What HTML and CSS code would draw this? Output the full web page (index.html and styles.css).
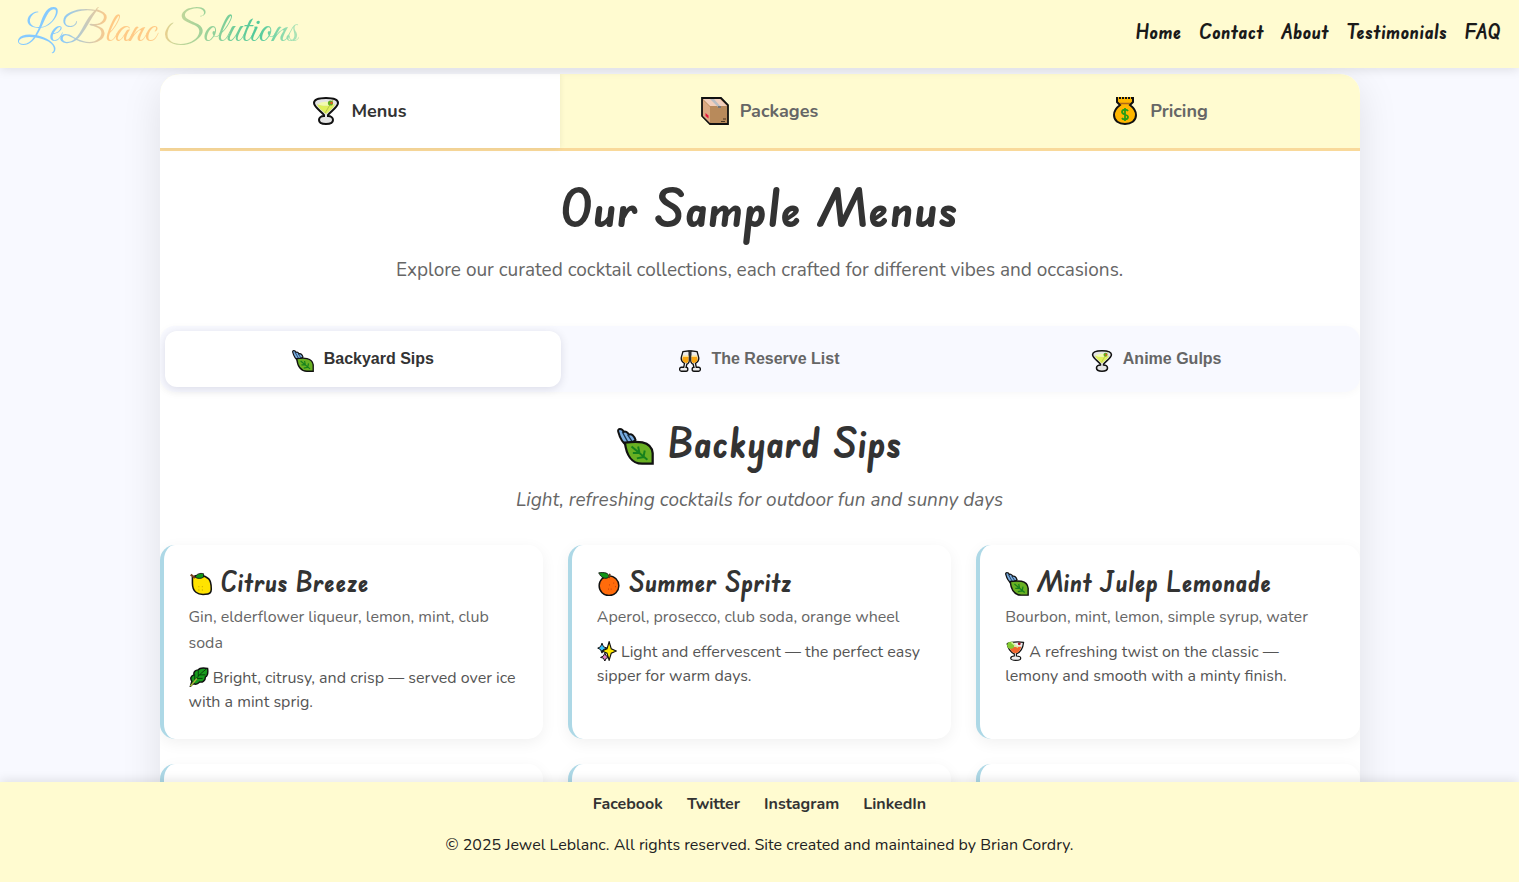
FILE: index.html
```html
<!DOCTYPE html>
<html lang="en">
<head>
<meta charset="utf-8">
<meta name="viewport" content="width=device-width, initial-scale=1">
<title>LeBlanc Solutions</title>
<link rel="stylesheet" href="styles.css">
</head>
<body>
<svg class="sprite" aria-hidden="true">
  <symbol id="martini" viewBox="0 0 28 28">
    <path d="M2 6C2 2.500 8 1 14 1s12 1.500 12 5c0 4-8 9-10 12v1c3 0 5 2 5 4 0 3-3 4-7 4s-7-1-7-4c0-2 2-4 5-4v-1C10 15 2 10 2 6z" fill="#e4e4e4" stroke="#111" stroke-width="2"/>
    <path d="M5 7c4 2 14 2 18 0-1 4-7 8-9 10C12 15 6 11 5 7z" fill="#dff05c"/>
    <path d="M6 7c4-3 12-3 16 0-4 2-12 2-16 0z" fill="#f2fbae"/>
    <path d="M13 16 21 3" stroke="#b8c34a"/><circle cx="18.500" cy="6" r="2.600" fill="#62ac20"/><circle cx="19.500" cy="6" r="1.200" fill="#ef5322"/>
  </symbol>
  <symbol id="box" viewBox="0 0 28 28">
    <path d="M1 1h19l7 7v19H9l-8-8z" fill="#b88a5b" stroke="#111" stroke-width="1.800"/>
    <path d="M2 2h17l7 7H9z" fill="#f2cfbc"/><path d="M2 3l7 7v16l-7-7z" fill="#dba982"/>
    <path d="M9 2h4l7 8h-3z" fill="#b9bec3"/><path d="M17 9h3v2h-3z" fill="#777"/>
    <path d="M4.500 16l3 2.500v3l-3-2.500z" fill="#e5173f"/><path d="M22 22h3M20 24.500h4" stroke="#493522"/>
  </symbol>
  <symbol id="money" viewBox="0 0 28 28">
    <path d="M6 1h16v4l-3 3c4 3 6 7 6 10 0 6-5 9-11 9S3 24 3 18c0-4 2-7 6-10L6 5z" fill="#ffb600" stroke="#111" stroke-width="2"/>
    <path d="M7 1h14" stroke="#ffb600" stroke-width="2" stroke-dasharray="1 2"/><path d="M9 6.500h10" stroke="#ac6719" stroke-width="1.500"/>
    <path d="M17 14c-1-2-6-2-6 1s6 2 6 5-5 3-6 1M14 11v13" fill="none" stroke="#269d16" stroke-width="1.800"/>
  </symbol>
  <symbol id="leaf" viewBox="0 0 28 28">
    <path d="M1 3C0 0 4 0 5 3c1-1 3 0 4 2 2-1 4 1 5 4l-6 5C4 11 2 7 1 3z" fill="#79ace0" stroke="#111" stroke-width="1.500"/>
    <path d="M4 3l5 9M8 5l4 6" stroke="#18344f"/>
    <path d="M6 11c8-1 20-2 21 8v8h-8C11 27 7 20 6 11z" fill="#69b023" stroke="#111" stroke-width="1.700"/>
    <path d="M11 14l12 10M16 14l1 5-5 0M21 17l-1 5-5 1" fill="none" stroke="#16801d" stroke-width="1.500"/>
  </symbol>
  <symbol id="cheers" viewBox="0 0 28 28">
    <path d="M5 2l8-1v13c0 2-2 4-3 4l-1 4c3 0 3 5 0 5H3c-3 0-3-5 0-5h3l1-5c-3-2-5-4-4-8zM23 2l-8-1v13c0 2 2 4 3 4l1 4c-3 0-3 5 0 5h6c3 0 3-5 0-5h-3l-1-5c3-2 5-4 4-8z" fill="#ececec" stroke="#111" stroke-width="1.700"/>
    <path d="M5 8l7 0v6c-1 3-3 3-5 2-3-2-3-4-2-8zM23 8l-7 0v6c1 3 3 3 5 2 3-2 3-4 2-8z" fill="#f8a511"/><path d="M5 7h7v2H5zM16 7h7v2h-7z" fill="#ffe18b"/>
  </symbol>
  <symbol id="lemon" viewBox="0 0 28 28">
    <path d="M4 6c5-3 14-3 19 2 3 3 3 7 3 12 0 4-2 6-7 6-9 1-15-3-15-13z" fill="#ffe300" stroke="#111" stroke-width="1.800"/>
    <path d="M7 6c2-4 6-5 10-4v4c-3 2-7 2-10 0z" fill="#129518" stroke="#111"/><path d="M2 3l5 4" stroke="#79401d" stroke-width="2.500"/>
    <path d="M11 17h1m3 0h1m-5 4h1m3 0h1" stroke="#c7a900" stroke-width="1.500"/>
  </symbol>
  <symbol id="orange" viewBox="0 0 28 28">
    <circle cx="14" cy="16" r="11.500" fill="#ff6b0b" stroke="#111" stroke-width="1.700"/>
    <path d="M2 1c7-1 12 0 12 5-5 3-9 1-12-5z" fill="#129518" stroke="#111"/><path d="M14 7l1-5" stroke="#693a18" stroke-width="2"/>
    <path d="M14 15h1m4-2h1m-4 7h1m4-3h1m-9 3h1" stroke="#c8450c" stroke-width="1.500"/>
  </symbol>
  <symbol id="herb" viewBox="0 0 28 28">
    <path d="M2 27l2-7c-3-4-1-8 3-9-1-4 2-7 6-7 2-3 7-3 13-2 1 6 0 10-3 12 0 5-4 8-8 7-3 3-6 4-9 2z" fill="#189b1d" stroke="#111" stroke-width="2"/>
    <path d="M3 26C8 17 16 9 24 3M8 18V10m5 3V5m-3 11h9m-4-5h8" fill="none" stroke="#073b0a" stroke-width="1.300"/><path d="M2 27l9-11" stroke="#a4b936" stroke-width="2"/>
  </symbol>
  <symbol id="sparkle" viewBox="0 0 28 28">
    <path d="M11 17l2 4 4 2-4 1-2 4-2-4-4-1 4-2z" fill="#e986c6" stroke="#111" stroke-width="1.400"/>
    <path d="M7 3l2 5 5 2-5 2-2 5-2-5-4-2 4-2z" fill="#39c5ff" stroke="#111" stroke-width="1.400"/>
    <path d="M17 1l3 10 7 3-7 3-3 10-3-10-7-3 7-3z" fill="#ffe800" stroke="#111" stroke-width="1.600"/>
  </symbol>
  <symbol id="cocktail" viewBox="0 0 28 28">
    <path d="M3 4c2-3 18-3 23-2-1 10-5 14-10 16v3c3 0 6 1 6 3 0 4-14 4-14 0 0-2 2-3 5-3v-3C7 15 4 10 3 4z" fill="#eee" stroke="#111" stroke-width="1.700"/>
    <path d="M6 8h17c-2 6-5 9-9 9-3 0-7-4-8-9z" fill="#f1662c"/><circle cx="8" cy="6" r="5" fill="#83cb32"/><path d="M9 2l9 7" stroke="#d6f29b" stroke-width="2"/><circle cx="20" cy="4" r="2" fill="#a91024"/>
  </symbol>
</svg>

<header class="site-header">
  <a class="logo" href="#">LeBlanc Solutions</a>
  <nav class="site-nav" aria-label="Main">
    <a href="#">Home</a><a href="#">Contact</a><a href="#">About</a><a href="#">Testimonials</a><a href="#">FAQ</a>
  </nav>
</header>

<main class="page">
  <div class="panel">
    <div class="tabs">
      <button class="tab tab-active" type="button"><svg class="icon-tab"><use href="#martini"/></svg>Menus</button>
      <button class="tab" type="button"><svg class="icon-tab"><use href="#box"/></svg>Packages</button>
      <button class="tab" type="button"><svg class="icon-tab"><use href="#money"/></svg>Pricing</button>
    </div>
    <section class="intro">
      <h1>Our Sample Menus</h1>
      <p>Explore our curated cocktail collections, each crafted for different vibes and occasions.</p>
    </section>
    <div class="subtabs">
      <button class="subtab subtab-active" type="button"><svg class="icon-sub"><use href="#leaf"/></svg>Backyard Sips</button>
      <button class="subtab" type="button"><svg class="icon-sub"><use href="#cheers"/></svg>The Reserve List</button>
      <button class="subtab" type="button"><svg class="icon-sub"><use href="#martini"/></svg>Anime Gulps</button>
    </div>
    <section class="menu">
      <h2><svg class="icon-heading"><use href="#leaf"/></svg>Backyard Sips</h2>
      <p class="tagline">Light, refreshing cocktails for outdoor fun and sunny days</p>
      <div class="cards">
        <article class="card">
          <h3><svg class="icon-card"><use href="#lemon"/></svg>Citrus Breeze</h3>
          <p class="ingredients">Gin, elderflower liqueur, lemon, mint, club soda</p>
          <p class="description"><svg class="icon-inline"><use href="#herb"/></svg> Bright, citrusy, and crisp — served over ice with a mint sprig.</p>
        </article>
        <article class="card">
          <h3><svg class="icon-card"><use href="#orange"/></svg>Summer Spritz</h3>
          <p class="ingredients">Aperol, prosecco, club soda, orange wheel</p>
          <p class="description"><svg class="icon-inline"><use href="#sparkle"/></svg> Light and effervescent — the perfect easy sipper for warm days.</p>
        </article>
        <article class="card">
          <h3><svg class="icon-card"><use href="#leaf"/></svg>Mint Julep Lemonade</h3>
          <p class="ingredients">Bourbon, mint, lemon, simple syrup, water</p>
          <p class="description"><svg class="icon-inline"><use href="#cocktail"/></svg> A refreshing twist on the classic — lemony and smooth with a minty finish.</p>
        </article>
        <article class="card"></article>
        <article class="card"></article>
        <article class="card"></article>
      </div>
    </section>
  </div>
</main>

<footer class="site-footer">
  <nav class="social" aria-label="Social">
    <a href="#">Facebook</a><a href="#">Twitter</a><a href="#">Instagram</a><a href="#">LinkedIn</a>
  </nav>
  <p>© 2025 Jewel Leblanc. All rights reserved. Site created and maintained by Brian Cordry.</p>
</footer>
</body>
</html>
```
FILE: styles.css
```css
* { box-sizing: border-box; }
h1, h2, h3, p { margin: 0; }
a { color: inherit; text-decoration: none; }
button { border: 0; cursor: pointer; }
svg { flex: none; }
.sprite { display: none; }

body {
  margin: 0;
  height: 100vh;
  display: flex;
  flex-direction: column;
  background: #f8f9ff;
  color: #333;
  font-family: Nunito, Lato, sans-serif;
  font-size: 16px;
}
h1, h2, h3, .site-nav {
  font-family: "Edu SA Beginner", Caveat, cursive;
  font-weight: 700;
}

.site-header {
  position: relative;
  z-index: 2;
  display: flex;
  justify-content: space-between;
  align-items: center;
  padding: 0 18px 6px;
  min-height: 68px;
  background: #fffbd0;
  box-shadow: 0 2px 10px rgba(0, 0, 0, .1);
}
.logo {
  font: 43px/60px "Great Vibes", "Liberation Serif", cursive;
  background: linear-gradient(90deg, #85caff 15%, #ffca86 32%, #ffca86 50%, #c9d79a 56%, #4fc99a 85%, #b3e5b8);
  background-clip: text;
  -webkit-background-clip: text;
  color: transparent;
}
.site-nav {
  display: flex;
  gap: 17px;
  color: #1a1a1a;
  font-size: 21px;
}

.page {
  flex: 1;
  min-height: 0;
  padding-top: 6px;
  overflow-y: auto;
  scrollbar-width: none;
}
.panel {
  max-width: 1200px;
  margin: 0 auto;
  border-radius: 20px;
  background: #fff;
  box-shadow: 0 10px 40px rgba(0, 0, 0, .1);
  overflow: hidden;
}
.tabs {
  display: grid;
  grid-template-columns: repeat(3, 1fr);
  border-bottom: 3px solid #f9d99a;
  background: #fffbd0;
}
.tab {
  display: flex;
  justify-content: center;
  align-items: center;
  gap: 11px;
  padding: 23px;
  background: transparent;
  color: #666;
  font: 700 18px/28px Nunito, Lato, sans-serif;
}
.tab-active { background: #fff; color: #333; box-shadow: 0 0 6px rgba(0, 0, 0, .08); }
.icon-tab { width: 28px; height: 28px; }

.intro { padding: 26px 20px 42px; text-align: center; }
.intro h1 { margin-bottom: 19px; font-size: 52px; line-height: 60px; }
.intro p { color: #666; font-size: 19px; line-height: 28px; }

.subtabs {
  display: grid;
  grid-template-columns: repeat(3, 1fr);
  padding: 5px;
  border-radius: 15px;
  background: #f8f9ff;
  box-shadow: 0 2px 8px rgba(0, 0, 0, .03);
}
.subtab {
  display: flex;
  justify-content: center;
  align-items: center;
  gap: 10px;
  padding: 15px;
  border-radius: 12px;
  background: transparent;
  color: #666;
  font: 700 16px/26px "Liberation Sans", Arial, sans-serif;
}
.subtab-active { background: #fff; color: #333; box-shadow: 0 2px 10px rgba(0, 0, 60, .12); }
.icon-sub { width: 22px; height: 22px; margin-top: 3px; }

.menu { padding-top: 24px; text-align: center; }
.menu h2 {
  display: flex;
  justify-content: center;
  align-items: center;
  gap: 14px;
  margin-bottom: 18px;
  font-size: 41px;
  line-height: 52px;
}
.icon-heading { width: 37px; height: 37px; margin-top: 8px; }
.tagline { color: #666; font-size: 19px; font-style: italic; line-height: 28px; }

.cards {
  display: grid;
  grid-template-columns: repeat(3, 1fr);
  gap: 25px;
  padding: 31px 0 30px;
  text-align: left;
}
.card {
  min-height: 194px;
  padding: 25px;
  border-left: 4px solid #add8e6;
  border-radius: 15px;
  background: #fff;
  box-shadow: 0 4px 15px rgba(0, 0, 0, .06);
}
.card h3 {
  display: flex;
  align-items: flex-start;
  gap: 8px;
  margin-bottom: 8px;
  font-size: 27px;
  line-height: 24px;
}
.icon-card { width: 24px; height: 24px; margin-top: 2px; }
.ingredients { margin-bottom: 10px; color: #666; font-size: 16px; line-height: 26px; }
.description { color: #555; font-size: 16px; line-height: 24px; }
.icon-inline { width: 20px; height: 20px; vertical-align: -4px; }

.site-footer {
  position: relative;
  z-index: 2;
  padding: 10px 20px 25px;
  background: #fffbd0;
  box-shadow: 0 -2px 10px rgba(0, 0, 0, .1);
  line-height: 24px;
  text-align: center;
}
.social {
  display: flex;
  justify-content: center;
  gap: 24px;
  margin-bottom: 17px;
  font-weight: 700;
}
.site-footer p { color: #222; }
```
